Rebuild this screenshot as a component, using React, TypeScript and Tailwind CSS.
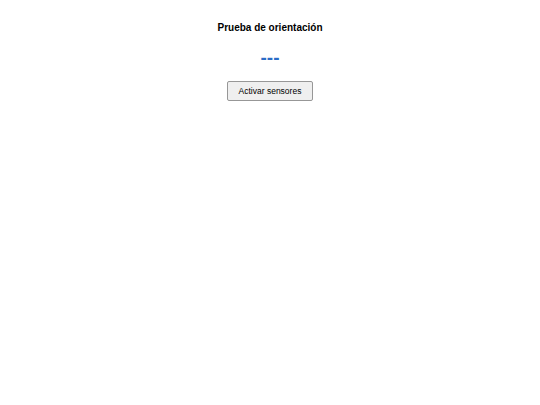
export default function App() {
  return (
    <div className="min-h-[405px] w-full bg-white text-center text-black" style={{ fontFamily: '"Liberation Sans", Arial, sans-serif' }}>
      <div className="flex flex-col items-center pt-[22px]">
        <h1 className="text-[10px] font-bold leading-[12px]">Prueba de orientación</h1>
        <div className="mt-[13px] text-[19px] font-bold leading-[22px] text-[#2a6cc6]">---</div>
        <button className="mt-[12px] h-[20px] w-[86px] rounded-[2px] border border-[#979797] bg-[#efefef] text-[8.5px] leading-[18px] text-black">
          Activar sensores
        </button>
      </div>
    </div>
  );
}
